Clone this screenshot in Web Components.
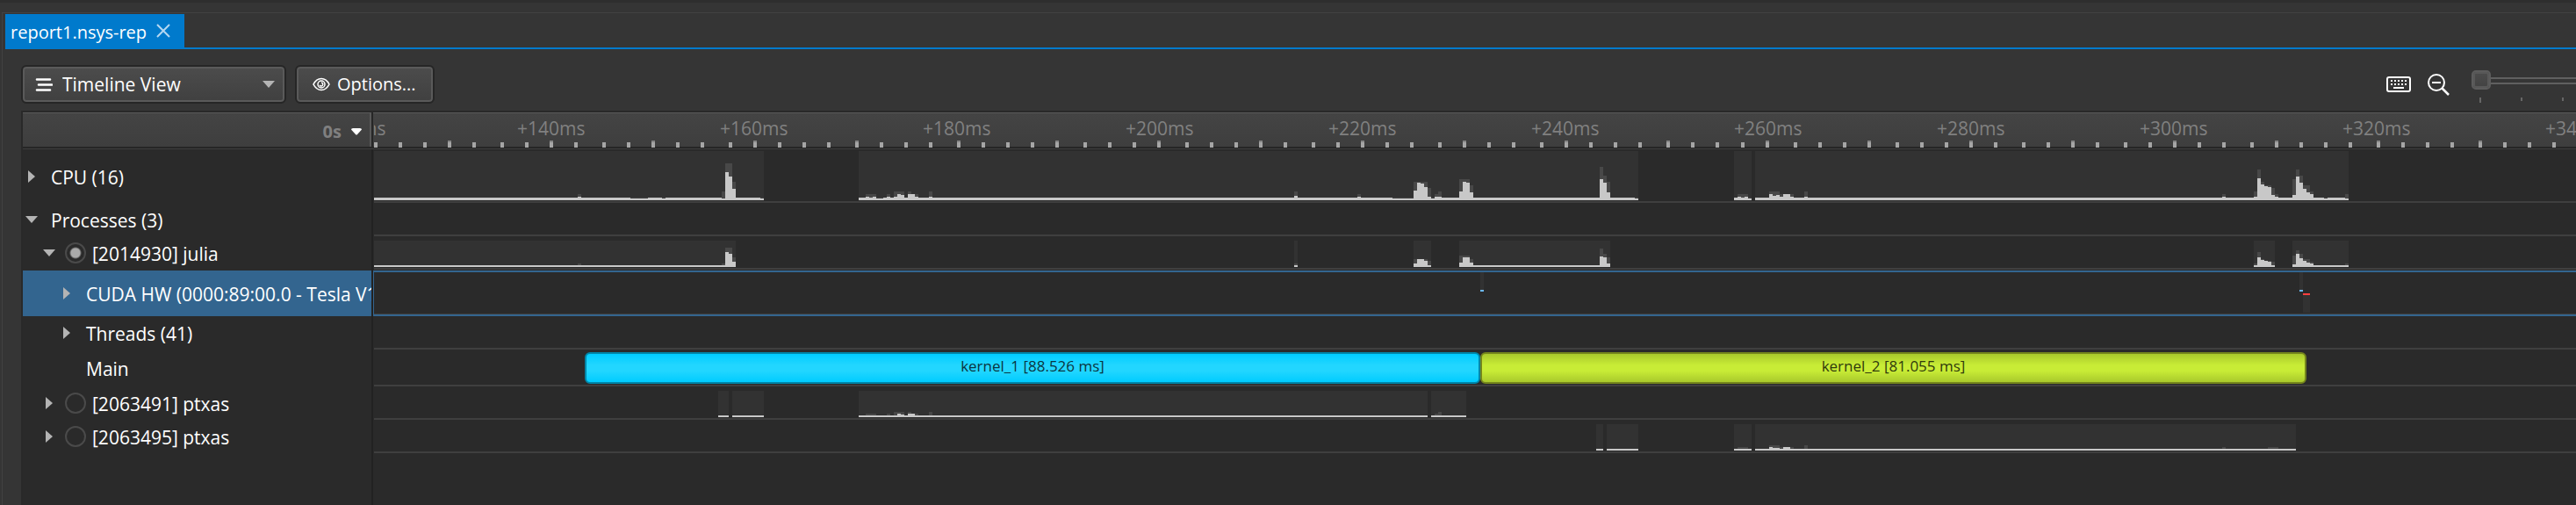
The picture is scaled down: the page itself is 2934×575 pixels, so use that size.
<!DOCTYPE html>
<html lang="en">
<head>
<meta charset="utf-8">
<title>report1.nsys-rep</title>
<style>
  html, body { height: 100%; }
  body {
    margin: 0;
    background: #353535;
    color: #fff;
    font: 22px/30px "Open Sans", "Noto Sans", sans-serif;
    overflow: hidden;
  }
</style>
</head>
<body>
<report-window>
  <report-tab slot="tabs">report1.nsys-rep</report-tab>
  <report-toolbar slot="toolbar"></report-toolbar>
  <time-line>
    <time-ruler slot="ruler"></time-ruler>
    <track-row style="--h:61px" level="0" state="closed" chart="cpu">CPU (16)</track-row>
    <track-row style="--h:38px" level="0" state="open">Processes (3)</track-row>
    <track-row style="--h:38px" level="1" state="open" radio="on" chart="julia">[2014930] julia</track-row>
    <track-row style="--h:52px" level="2" state="closed" selected chart="cuda">CUDA HW (0000:89:00.0 - Tesla V1</track-row>
    <track-row style="--h:38px" level="2" state="closed">Threads (41)</track-row>
    <track-row style="--h:42px" level="2" state="leaf">Main
      <kernel-range slot="lane" style="--w:1020px" tone="cyan">kernel_1 [88.526 ms]</kernel-range>
      <kernel-range slot="lane" style="--w:941px" tone="lime">kernel_2 [81.055 ms]</kernel-range>
    </track-row>
    <track-row style="--h:38px" level="1" state="closed" radio="off" chart="ptxas1">[2063491] ptxas</track-row>
    <track-row style="--h:38px" level="1" state="closed" radio="off" chart="ptxas2">[2063495] ptxas</track-row>
  </time-line>
</report-window>

<script>
const attach = (el, html) => { el.attachShadow({ mode: 'open' }).innerHTML = html; };

/* Axis coordinate of the first visible column. */
const AXIS_START = 426;
const AXIS_WIDTH = 2508;

/* Sampled utilisation. segs: [from, to]; bars: [x, peak, average, width = 4]. */
const CHARTS = {
  cpu: { height: 59, top: 2, bottom: 58, base: 3,
    segs: [[426,870],[978,1866],[1975,1995],[1999,2675]],
    bars: [[658,7,4],[718,3,2,20],[754,3,2],[822,10,2],[826,42,32],[830,42,27],[834,21,13],[866,3,2],
      [986,7,4],[990,7,3],[994,7,4],[998,3,2,8],[1010,7,4],[1018,10,4],[1022,10,7],[1026,10,6],[1034,10,7],[1038,7,7],[1042,7,4],[1058,10,4],
      [1474,10,5],[1546,7,4],[1586,3,2,24],[1610,21,11],[1614,21,20],[1618,21,19],[1622,21,15],[1626,14,4],[1630,3,2],[1634,7,4],[1638,10,4],
      [1662,24,10],[1666,24,21],[1670,24,20],[1674,17,9],[1822,38,24],[1826,28,20],[1830,21,9],[1862,3,2],
      [1979,7,4],[1983,7,3],[1987,7,4],[1991,3,2],[2015,10,7],[2019,10,5],[2023,10,6],[2027,7,4],[2031,7,7],[2035,7,7],[2039,7,4],[2055,10,4],
      [2531,7,4],[2567,10,4],[2571,35,25],[2575,21,18],[2579,17,16],[2583,17,15],[2587,14,6],[2591,7,4],
      [2611,24,6],[2615,35,27],[2619,28,20],[2623,17,13],[2627,17,9],[2631,10,7],[2647,3,2],[2671,7,2]] },
  julia: { height: 36, top: 5, bottom: 35, base: 2,
    segs: [[426,838],[1474,1478],[1610,1630],[1662,1834],[2567,2591],[2611,2675]],
    bars: [[658,4,2],[822,4,2],[826,22,17],[830,22,15],[834,11,6],[1474,4,2],[1610,9,4],[1614,9,9],[1618,9,9],[1622,9,7],[1626,7,2],
      [1662,13,5],[1666,13,11],[1670,13,11],[1674,9,5],[1822,21,12],[1826,15,11],[1830,11,4],
      [2567,4,2],[2571,17,11],[2575,9,8],[2579,7,7],[2583,7,6],[2587,6,2],[2611,13,3],[2615,19,15],[2619,15,10],[2623,9,7],[2627,9,5],[2631,6,4],[2671,4,2]] },
  ptxas1: { height: 36, top: 5, bottom: 35, base: 2,
    segs: [[818,830],[834,870],[978,1626],[1630,1670]],
    bars: [[986,4,2,12],[1010,4,2],[1018,6,2],[1022,6,4],[1026,6,3],[1034,6,4],[1038,4,4],[1042,4,2],[1058,6,2],[1634,4,2],[1638,6,2]] },
  ptxas2: { height: 36, top: 5, bottom: 35, base: 2,
    segs: [[1818,1826],[1830,1866],[1975,1995],[1999,2615]],
    bars: [[1979,4,2,12],[2015,6,4],[2019,6,3],[2023,6,3],[2027,4,2],[2031,4,4],[2035,4,4],[2039,4,2],[2055,6,2],[2531,4,2],[2583,4,2,12]] }
};

const rect = (x, y, w, h, fill) => `<rect x="${x}" y="${y}" width="${w}" height="${h}" fill="${fill}"/>`;
const axisSvg = (height, body) =>
  `<svg width="${AXIS_WIDTH}" height="${height}" viewBox="${AXIS_START} 0 ${AXIS_WIDTH} ${height}" shape-rendering="crispEdges" aria-hidden="true">${body}</svg>`;

function chartSvg(name) {
  if (name === 'cuda') {
    return axisSvg(48,
      rect(1686,0,4,20,'#323232') + rect(1686,20,4,2,'#6cb8f4') +
      rect(2619,0,4,20,'#323232') + rect(2619,20,4,2,'#6cb8f4') +
      rect(2623,24,8,2,'#ff4040') + rect(2623,26,8,20,'#323232'));
  }
  const c = CHARTS[name];
  let s = '';
  for (const [a, b] of c.segs) {
    s += rect(a, c.top, b - a, c.bottom - c.top, '#323232') + rect(a, c.bottom - c.base, b - a, c.base, '#c8c8c8');
  }
  for (const [x, peak, avg, w = 4] of c.bars) {
    s += rect(x, c.bottom - peak, w, peak, '#484848') + rect(x, c.bottom - avg, w, avg, '#c8c8c8');
  }
  return axisSvg(c.height, s);
}

customElements.define('report-window', class extends HTMLElement {
  constructor() {
    super();
    attach(this, `<style>
      :host { display: flex; flex-direction: column; min-height: 100vh; border-top: 3px solid #2e2e2e; box-sizing: border-box; }
      main { flex: 1; display: flex; flex-direction: column; margin: 11px 0 0 2px; border: solid #424242; border-width: 1px 0 0 1px; }
      nav { display: flex; margin-left: 3px; padding-top: 1px; border-bottom: 2px solid #007acc; }
      section { flex: 1; display: flex; flex-direction: column; padding: 18px 0 0 21px; }
    </style>
    <main><nav><slot name="tabs"></slot></nav>
    <section><slot name="toolbar"></slot><slot></slot></section></main>`);
  }
});

customElements.define('report-tab', class extends HTMLElement {
  constructor() {
    super();
    attach(this, `<style>
      :host { display: flex; align-items: center; gap: 11px; height: 38px; padding: 0 16px 0 6px; background: #007acc; font-size: 20px; }
      button { display: flex; padding: 0; border: 0; background: none; }
      span { padding-top: 4px; }
    </style><span><slot></slot></span>
    <button aria-label="Close tab"><svg width="16" height="16" viewBox="0 0 16 16"><path d="M1 1l14 14M15 1L1 15" stroke="#b5d8f2" stroke-width="2" fill="none"/></svg></button>`);
  }
});

customElements.define('report-toolbar', class extends HTMLElement {
  constructor() {
    super();
    attach(this, `<style>
      :host { display: flex; align-items: flex-start; gap: 10px; height: 52px; }
      .box { box-sizing: border-box; display: flex; align-items: center; height: 44px; color: #fff; font: inherit;
        border: 2px solid #262626; border-radius: 6px; box-shadow: inset 0 0 0 2px #5a5a5a; background: linear-gradient(#4c4c4c, #404040); }
      .view { width: 302px; padding: 0 11px 0 14px; gap: 11px; }
      select { flex: 1; min-width: 0; appearance: none; border: 0; padding: 0; background: none; color: inherit; font: inherit; font-size: 21px; outline: 0; }
      button.box { padding: 0 19px 0 18px; gap: 8px; font-size: 20px; }
      .tools { display: flex; margin-left: auto; }
      .icon { padding: 0; border: 0; background: none; display: flex; align-items: center; height: 44px; margin-right: 18px; }
      .icon + .icon { margin-right: 25px; }
    </style>
    <label class="box view">
      <svg width="20" height="16" viewBox="0 0 20 16" aria-hidden="true"><path d="M2 2.500h15M4 8.500h15M2 14.500h15" stroke="#fff" stroke-width="2.600" stroke-linecap="round"/></svg>
      <select aria-label="View"><option>Timeline View</option></select>
      <svg width="14" height="8" viewBox="0 0 14 8" aria-hidden="true"><path d="M0 0h14L7 8z" fill="#b4b4b4"/></svg>
    </label>
    <button class="box">
      <svg width="20" height="16" viewBox="0 0 20 16" fill="none" stroke="#fff" aria-hidden="true"><path d="M1 8C3 4 6.500 1.500 10 1.500S17 4 19 8c-2 4-5.500 6.500-9 6.500S3 12 1 8z" stroke-width="1.600"/><circle cx="10" cy="8" r="4" stroke-width="1.500"/><path d="M8 9a2 2 0 1 0 2-3" stroke-width="1.500"/></svg>
      Options...
    </button>
    <div class="tools">
      <button class="icon" aria-label="Keyboard shortcuts"><svg width="28" height="18" viewBox="0 0 28 18"><rect x="1" y="1" width="26" height="16" rx="2" fill="none" stroke="#fff" stroke-width="2"/><path d="M5 5h18M5 9h18" stroke="#fff" stroke-width="2" stroke-dasharray="2 2"/><path d="M8 13h12" stroke="#fff" stroke-width="2"/></svg></button>
      <button class="icon" aria-label="Zoom out"><svg width="26" height="26" viewBox="0 0 26 26" fill="none" stroke="#fff" stroke-width="2"><circle cx="11" cy="11" r="9"/><path d="M6 11h10"/><path d="M17 17l8 8" stroke-width="2.500"/></svg></button>
      <zoom-slider></zoom-slider>
    </div>`);
  }
});

customElements.define('zoom-slider', class extends HTMLElement {
  constructor() {
    super();
    let ticks = '';
    for (let i = 0; i < 10; i++) ticks += rect(9 + i * 47, 0, 2, i ? 4 : 6, '#666');
    attach(this, `<style>
      :host { display: block; width: 119px; height: 44px; overflow: hidden; padding-top: 6px; box-sizing: border-box; }
      input { appearance: none; display: block; width: 500px; height: 22px; margin: 0;
        background: linear-gradient(#606060 0 2px, #353535 2px 6px, #606060 6px 8px) 0 8px / 100% 8px no-repeat; }
      input::-webkit-slider-thumb { appearance: none; box-sizing: border-box; width: 22px; height: 22px; border: 2px solid #5c5c5c; border-radius: 5px;
        background: linear-gradient(#4c4c4c, #424242); box-shadow: inset 0 0 0 2px #585858; }
      svg { display: block; margin-top: 9px; }
    </style><input type="range" min="0" max="100" value="0" aria-label="Zoom">
    <svg width="500" height="6" shape-rendering="crispEdges" aria-hidden="true">${ticks}</svg>`);
  }
});

customElements.define('time-line', class extends HTMLElement {
  constructor() {
    super();
    attach(this, `<style>
      :host { flex: 1; display: flex; flex-direction: column; border: solid #292929; border-width: 2px 0 0 2px; overflow: hidden;
        background: linear-gradient(90deg, #2a2a2a 397px, #222 397px 399px, #2a2a2a 399px); }
    </style><slot name="ruler"></slot><slot></slot>`);
  }
});

customElements.define('time-ruler', class extends HTMLElement {
  constructor() {
    super();
    let ticks = '';
    for (let k = 0; k < 87; k++) {
      const x = AXIS_START + 4 * Math.floor(k * 7.216 + 0.1) + (k > 53 ? 1 : 0);
      if (k % 4 === 3) ticks += rect(x, 0, 4, 2, '#868686');
      ticks += rect(x, 2, 4, 6, '#a6a6a6');
    }
    let labels = '<span class="cut">ms</span>';
    for (let ms = 140; ms <= 340; ms += 20) labels += `<span>+${ms}ms</span>`;
    attach(this, `<style>
      :host { display: grid; grid-template-columns: 397px 3px minmax(0, 1fr); height: 42px; box-sizing: border-box; color: #808080;
        border-bottom: 1px solid #3e3e3e; background: linear-gradient(#5a5a5a 0 1px, #444 1px, #3e3e3e 39px, #262626 39px); }
      .origin { display: flex; justify-content: flex-end; align-items: center; gap: 10px; padding: 0 8px 0 0; height: 39px; border-right: 2px solid #585858; font-weight: 700; font-size: 20px; padding-top: 5px; box-sizing: border-box; }
      button { border: 0; padding: 0; background: none; display: flex; }
      i { background: #262626; width: 2px; }
      .axis { overflow: hidden; display: flex; flex-direction: column; justify-content: space-between; height: 40px; padding-top: 3px; box-sizing: border-box; }
      .labels { display: flex; margin-left: -16px; height: 29px; line-height: 30px; font-size: 21px; }
      span { flex: 0 0 231px; }
      .cut { flex-basis: 179px; }
      svg { display: block; flex: none; }
    </style>
    <div class="origin">0s <button aria-label="Time origin"><svg width="14" height="8" viewBox="0 0 14 8"><path d="M1 1.500Q1 0 3 0h8q2 0 2 1.500L8 7q-1 1-2 0z" fill="#fff"/></svg></button></div>
    <i></i>
    <div class="axis"><div class="labels">${labels}</div>${axisSvg(8, ticks)}</div>`);
  }
});

customElements.define('track-row', class extends HTMLElement {
  constructor() {
    super();
    const state = this.getAttribute('state');
    const level = +this.getAttribute('level');
    const radio = this.getAttribute('radio');
    const chart = this.getAttribute('chart');
    const arrow = state === 'open'
      ? '<svg width="14" height="8" viewBox="0 0 14 8"><path d="M0 0h14L7 8z" fill="#b4b4b4"/></svg>'
      : '<svg width="8" height="14" viewBox="0 0 8 14"><path d="M0 0v14l8-7z" fill="#b4b4b4"/></svg>';
    const toggle = state === 'leaf' ? '<b></b>' : `<button aria-label="Toggle" aria-expanded="${state === 'open'}">${arrow}</button>`;
    const pick = radio ? `<input id="p" type="radio" ${radio === 'on' ? 'checked' : ''}>` : '';
    attach(this, `<style>
      :host { display: grid; grid-template-columns: 397px 3px minmax(0, 1fr); height: var(--h); }
      .name { display: flex; align-items: center; padding-left: ${level * 20}px; overflow: hidden; white-space: nowrap; }
      button, b { flex: 0 0 20px; display: flex; justify-content: center; padding: 0; border: 0; background: none; }
      label, .text { margin-left: ${radio ? 7 : 12}px; font-size: 21px; padding-top: 2px; }
      input { appearance: none; flex: none; box-sizing: border-box; width: 24px; height: 24px; margin: 0 0 0 8px; border: 2px solid #4a4a4a; border-radius: 50%; }
      input:checked { background: radial-gradient(circle, #aaa 5px, #6a6a6a 6px, transparent 7px); }
      .lane { grid-column: 3; display: flex; overflow: hidden; border-bottom: 2px solid #3f3f3f; }
      ::slotted(kernel-range:first-of-type) { margin-left: 240px; }
      svg { display: block; flex: none; }
      :host([selected]) { margin-top: 1px; }
      :host([selected]) .name { background: #33658f; }
      :host([selected]) .lane { border: solid #33658f; border-width: 2px 0 2px 1px; margin-left: -1px; box-shadow: inset 0 -1px #3f3f3f; }
    </style>
    <div class="name">${toggle}${pick}${radio ? '<label for="p"><slot></slot></label>' : '<div class="text"><slot></slot></div>'}</div>
    <div class="lane">${chart ? chartSvg(chart) : ''}<slot name="lane"></slot></div>`);
  }
});

customElements.define('kernel-range', class extends HTMLElement {
  constructor() {
    super();
    attach(this, `<style>
      :host { flex: 0 0 var(--w); box-sizing: border-box; height: 36px; margin-top: 3px; border: 2px solid; border-radius: 6px;
        text-align: center; font-size: 17px; line-height: 28px; }
      :host([tone=cyan]) { border-color: #0086a8; background: linear-gradient(#00ccff, #22d6ff 40% 60%, #00ccff); }
      :host([tone=lime]) { border-color: #75861c; background: linear-gradient(#a9c92c, #c8ec36 40% 60%, #a9c92c); }
      span { color: #0a3540; }
      :host([tone=lime]) span { color: #303a0c; }
    </style><span><slot></slot></span>`);
  }
});
</script>
</body>
</html>
